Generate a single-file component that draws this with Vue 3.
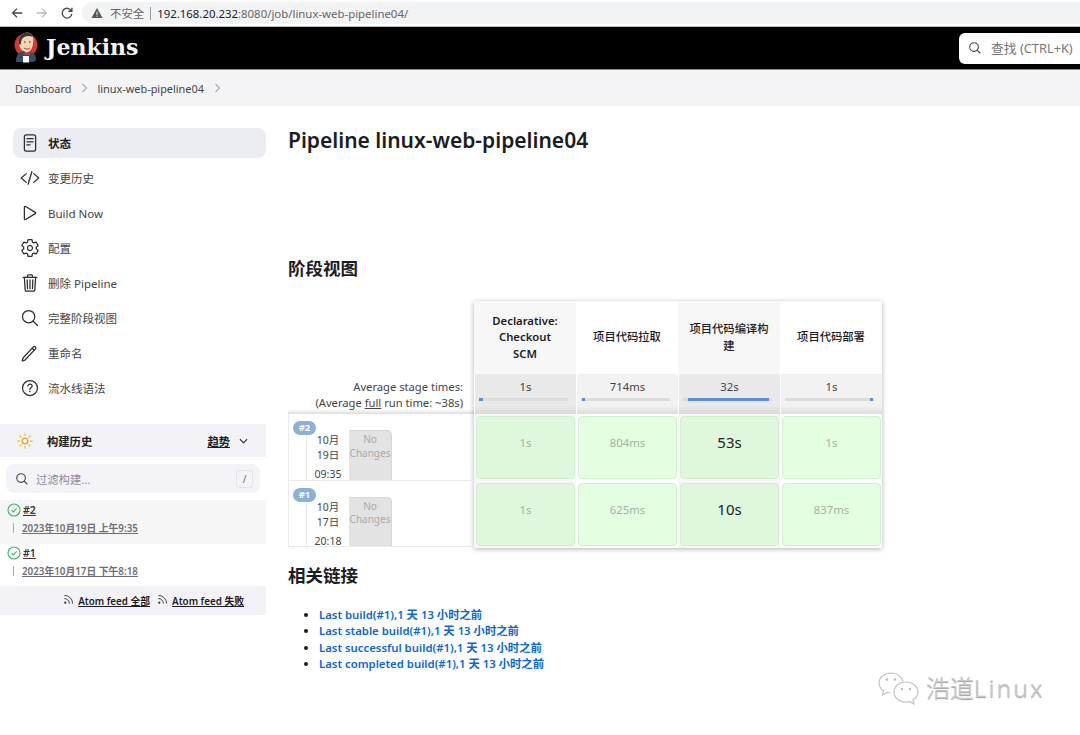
<script setup>
const gear =
  "M262.29 192.31a64 64 0 1057.4 57.4 64.13 64.13 0 00-57.4-57.4zM416.39 256a154.34 154.34 0 01-1.53 20.79l45.21 35.46a10.81 10.81 0 012.45 13.75l-42.77 74a10.81 10.81 0 01-13.14 4.59l-44.9-18.08a16.11 16.11 0 00-15.17 1.75A164.48 164.48 0 01325 400.8a15.94 15.94 0 00-8.82 12.14l-6.73 47.89a11.08 11.08 0 01-10.68 9.17h-85.54a11.11 11.11 0 01-10.69-8.87l-6.72-47.82a16.07 16.07 0 00-9-12.22 155.3 155.3 0 01-21.46-12.57 16 16 0 00-15.11-1.71l-44.89 18.07a10.81 10.81 0 01-13.14-4.58l-42.77-74a10.8 10.8 0 012.45-13.75l38.21-30a16.05 16.05 0 006-14.08c-.36-4.17-.58-8.33-.58-12.5s.21-8.27.58-12.35a16 16 0 00-6.07-13.94l-38.19-30A10.81 10.81 0 0149.48 186l42.77-74a10.81 10.81 0 0113.14-4.59l44.9 18.08a16.11 16.11 0 0015.17-1.75A164.48 164.48 0 01187 111.2a15.94 15.94 0 008.82-12.14l6.73-47.89A11.08 11.08 0 01213.23 42h85.54a11.11 11.11 0 0110.69 8.87l6.72 47.82a16.07 16.07 0 009 12.22 155.3 155.3 0 0121.46 12.57 16 16 0 0015.11 1.71l44.89-18.07a10.81 10.81 0 0113.14 4.58l42.77 74a10.8 10.8 0 01-2.45 13.75l-38.21 30a16.05 16.05 0 00-6.05 14.08c.33 4.14.55 8.3.55 12.47z";

const menu = [
  {
    label: "状态",
    active: true,
    paths: [
      "M160 48h192a48 48 0 0148 48v320a48 48 0 01-48 48H160a48 48 0 01-48-48V96a48 48 0 0148-48z",
      "M176 144h160",
      "M176 224h160",
      "M176 304h80",
    ],
  },
  {
    label: "变更历史",
    paths: ["M160 368L32 256l128-112", "M352 368l128-112-128-112", "M304 96l-96 320"],
  },
  {
    label: "Build Now",
    paths: [
      "M112 111v290c0 17.44 17 28.52 31 20.16l247.9-148.37c12.12-7.25 12.12-26.33 0-33.58L143 90.84c-14-8.36-31 2.72-31 20.16z",
    ],
  },
  { label: "配置", paths: [gear] },
  {
    label: "删除 Pipeline",
    paths: [
      "M112 112l20 320c.95 18.49 14.4 32 32 32h184c17.67 0 30.87-13.51 32-32l20-320",
      "M80 112h352",
      "M192 112V72a23.93 23.93 0 0124-24h80a23.93 23.93 0 0124 24v40",
      "M256 176v224",
      "M184 176l8 224",
      "M328 176l-8 224",
    ],
  },
  {
    label: "完整阶段视图",
    paths: [
      "M221.09 64a157.09 157.09 0 10157.09 157.09A157.1 157.1 0 00221.09 64z",
      "M338.29 338.29L448 448",
    ],
  },
  {
    label: "重命名",
    paths: [
      "M128 436L56 456l20-72L344 100a36 36 0 0152 0h0a36 36 0 010 52z",
      "M312 134l52 52",
    ],
  },
  {
    label: "流水线语法",
    paths: [
      "M256 64a192 192 0 10192 192A192 192 0 00256 64z",
      "M200 202.29s.84-17.5 19.57-32.57C230.68 160.77 244 158.18 256 158c10.93-.14 20.69 1.67 26.53 4.45 10 4.76 29.47 16.38 29.47 41.09 0 26-17 37.81-36.37 50.8S251 281.43 251 296",
      "M250 348a4 4 0 108 0 4 4 0 10-8 0",
    ],
  },
];

const searchPaths = menu[5].paths;

const history = [
  { id: "#2", date: "2023年10月19日 上午9:35", shaded: true },
  { id: "#1", date: "2023年10月17日 下午8:18", shaded: false },
];

const stages = [
  { name: "Declarative: Checkout SCM", avg: "1s", bar: { left: 0, width: 4 } },
  { name: "项目代码拉取", avg: "714ms", bar: { left: 1, width: 4 } },
  { name: "项目代码编译构建", avg: "32s", bar: { left: 6, width: 91 } },
  { name: "项目代码部署", avg: "1s", bar: { left: 96, width: 3 } },
];

const runs = [
  { id: "#2", month: "10月", day: "19日", time: "09:35", cells: ["1s", "804ms", "53s", "1s"] },
  { id: "#1", month: "10月", day: "17日", time: "20:18", cells: ["1s", "625ms", "10s", "837ms"] },
];

const links = ["Last build", "Last stable build", "Last successful build", "Last completed build"];
</script>

<template>
  <div class="page">
    <div class="browser">
      <svg class="nav" viewBox="0 0 16 16"><path d="M14 8H3M8 3L3 8l5 5" fill="none" stroke="#444" stroke-width="1.5" /></svg>
      <svg class="nav" viewBox="0 0 16 16"><path d="M2 8h11M8 3l5 5-5 5" fill="none" stroke="#bbb" stroke-width="1.5" /></svg>
      <svg class="nav" viewBox="0 0 16 16"><path d="M13 5.5A5.6 5.6 0 1013.6 9M13.6 2v4h-4" fill="none" stroke="#444" stroke-width="1.5" /></svg>
      <div class="address">
        <svg class="warn" viewBox="0 0 12 12"><path d="M6 1l5.5 10H.5z" fill="#555" /><path d="M5.5 4.5h1v3.5h-1zM5.5 8.8h1v1h-1z" fill="#f1f3f4" /></svg>
        <span class="insecure">不安全</span>
        <span class="sep"></span>
        <span class="host">192.168.20.232</span><span class="path">:8080/job/linux-web-pipeline04/</span>
      </div>
    </div>

    <header class="top">
      <svg class="logo" viewBox="0 0 24 32">
        <circle cx="12" cy="14" r="11.5" fill="#d33833" />
        <path d="M5 13C4 5 9 1 14 1.5C19 2 20 7 19 13C18 20 14 22 11 21C8 20 6 18 5 13Z" fill="#f0d6b7" />
        <path d="M5 13C4 5 9 1 14 1.5C17 2 18.5 4 19 6C15 4 10 5 8 8C7 10 7 12 6.5 14Z" fill="#3b3335" />
        <path d="M10 11h1.5M15 11h1.5" stroke="#222" stroke-width="1" />
        <path d="M10 17c2 1.5 4 1.5 6 0" fill="none" stroke="#8a4a3a" stroke-width="1" />
        <path d="M2 31c0-8 3-10 8-11l3 3 4-2c4 1 5 4 5 8l-2 2H3z" fill="#335061" />
        <path d="M10.5 21l3 2 3-2-.5 3-2.5-.5-3 .5z" fill="#d33833" />
        <path d="M9 25h6v6.500H9z" fill="#fff" />
      </svg>
      <span class="brand">Jenkins</span>
      <div class="search">
        <svg class="search-icon" viewBox="0 0 512 512">
          <path v-for="d in searchPaths" :key="d" :d="d" />
        </svg>
        <span>查找 (CTRL+K)</span>
      </div>
    </header>

    <nav class="crumbs">
      <span>Dashboard</span>
      <svg class="chev" viewBox="0 0 8 10"><path d="M1.5 1l4 4-4 4" /></svg>
      <span>linux-web-pipeline04</span>
      <svg class="chev" viewBox="0 0 8 10"><path d="M1.5 1l4 4-4 4" /></svg>
    </nav>

    <div class="main">
      <aside class="side">
        <ul class="menu">
          <li v-for="item in menu" :key="item.label" class="menu-item" :class="{ active: item.active }">
            <svg class="menu-icon" viewBox="0 0 512 512">
              <path v-for="d in item.paths" :key="d" :d="d" />
            </svg>
            <span>{{ item.label }}</span>
          </li>
        </ul>

        <section class="history">
          <div class="history-head">
            <svg class="sun" viewBox="0 0 20 20">
              <circle cx="10" cy="10" r="3.2" fill="none" stroke="#f0a020" stroke-width="1.5" />
              <path
                d="M10 1.5v3M10 15.5v3M1.5 10h3M15.5 10h3M4 4l2 2M14 14l2 2M4 16l2-2M14 6l2-2"
                stroke="#f5c242"
                stroke-width="1.5"
              />
            </svg>
            <span class="history-title">构建历史</span>
            <span class="trend">趋势</span>
            <svg class="trend-chev" viewBox="0 0 10 6"><path d="M1 1l4 4 4-4" /></svg>
          </div>
          <div class="filter">
            <svg class="filter-icon" viewBox="0 0 512 512">
              <path v-for="d in searchPaths" :key="d" :d="d" />
            </svg>
            <span class="filter-text">过滤构建...</span>
            <span class="key">/</span>
          </div>
          <div v-for="b in history" :key="b.id" class="build" :class="{ shaded: b.shaded }">
            <div class="build-line">
              <svg class="ok" viewBox="0 0 14 14">
                <circle cx="7" cy="7" r="6" />
                <path d="M4.5 7.2l1.8 1.8 3.4-3.600" />
              </svg>
              <span class="build-id">{{ b.id }}</span>
            </div>
            <div class="build-date">
              <i></i>
              <span>{{ b.date }}</span>
            </div>
          </div>
          <div class="feeds">
            <svg class="rss" viewBox="0 0 12 12"><path d="M1.5 1.5a9 9 0 019 9M1.5 5a5.5 5.5 0 015.5 5.5" /><circle cx="2.5" cy="9.5" r="1.2" /></svg>
            <span class="feed">Atom feed 全部</span>
            <svg class="rss" viewBox="0 0 12 12"><path d="M1.5 1.5a9 9 0 019 9M1.5 5a5.5 5.5 0 015.5 5.5" /><circle cx="2.5" cy="9.5" r="1.2" /></svg>
            <span class="feed">Atom feed 失败</span>
          </div>
        </section>
      </aside>

      <main class="content">
        <h1>Pipeline linux-web-pipeline04</h1>
        <h2 class="stage-title">阶段视图</h2>

        <div class="stage-view">
          <div class="labels">
            <div class="avg-label">
              <div>Average stage times:</div>
              <div>(Average <u>full</u> run time: ~38s)</div>
            </div>
            <div v-for="r in runs" :key="r.id" class="run">
              <span class="badge">{{ r.id }}</span>
              <div class="run-date">
                <div>{{ r.month }}</div>
                <div>{{ r.day }}</div>
                <div class="run-time">{{ r.time }}</div>
              </div>
              <div class="no-changes">No Changes</div>
            </div>
          </div>

          <div class="stages">
            <div v-for="(s, i) in stages" :key="s.name" class="col" :class="{ odd: i % 2 === 0 }">
              <div class="stage-name">{{ s.name }}</div>
              <div class="stage-avg">
                <div>{{ s.avg }}</div>
                <div class="bar">
                  <div class="bar-fill" :style="{ left: s.bar.left + '%', width: s.bar.width + '%' }"></div>
                </div>
              </div>
              <div v-for="r in runs" :key="r.id" class="cell" :class="{ long: i === 2 }">
                {{ r.cells[i] }}
              </div>
            </div>
          </div>
        </div>

        <h2 class="links-title">相关链接</h2>
        <ul class="links">
          <li v-for="l in links" :key="l"><a>{{ l }}(#1),1 天 13 小时之前</a></li>
        </ul>
      </main>
    </div>

    <div class="mark">
      <svg class="mark-icon" viewBox="0 0 44 34">
        <path d="M14 2C7 2 2 6.5 2 12c0 3.5 2 6 4.5 8L5.5 24l5-2.5c1 .3 2 .4 3 .5" />
        <path d="M14 2c6 0 11 3.5 12 8.5" />
        <path d="M29 11c-7 0-12 4.500-12 10s5 10 12 10c1.5 0 2.5-.2 3.5-.5L37 33l-1-4c3-2 5-4.5 5-8 0-5.5-5-10-12-10z" />
        <circle cx="10" cy="8.5" r="1.3" />
        <circle cx="18" cy="8.5" r="1.3" />
        <circle cx="25" cy="18" r="1.2" />
        <circle cx="33" cy="18" r="1.2" />
      </svg>
      <span>浩道<span class="mark-latin">Linux</span></span>
    </div>
  </div>
</template>

<style>
html,
body {
  margin: 0;
  background: #fff;
  overflow: hidden;
}
</style>

<style scoped>
.page {
  position: relative;
  width: 1080px;
  height: 735px;
  overflow: hidden;
  background: #fff;
  font-family: "Noto Sans", "Noto Sans CJK SC", sans-serif;
  color: #1c1c24;
}

.browser {
  display: flex;
  align-items: center;
  height: 26px;
  padding-left: 10px;
  gap: 11px;
  border-bottom: 1px solid #b9b9b9;
}
.nav {
  width: 14px;
  height: 14px;
  flex: none;
}
.address {
  display: flex;
  align-items: center;
  flex: 1;
  height: 22px;
  margin-left: -3px;
  padding-left: 9px;
  background: #f1f3f4;
  border-radius: 11px 0 0 11px;
  font-size: 11.4px;
}
.warn {
  width: 12px;
  height: 12px;
  margin-right: 7px;
}
.insecure {
  color: #666;
}
.sep {
  width: 1px;
  height: 13px;
  margin: 0 6px;
  background: #999;
}
.host {
  color: #222;
}
.path {
  color: #666;
}

.top {
  display: flex;
  align-items: center;
  height: 42px;
  background: #000;
  border-bottom: 1px solid #8a8a8a;
  padding-left: 14px;
}
.logo {
  width: 24px;
  height: 32px;
  margin-top: -2px;
}
.brand {
  margin-left: 8px;
  color: #f5f5f5;
  font-family: "DejaVu Serif", serif;
  font-weight: 700;
  font-size: 22px;
  line-height: 1;
  margin-top: -2px;
}
.search {
  display: flex;
  align-items: center;
  margin-left: auto;
  width: 121px;
  height: 31px;
  box-sizing: border-box;
  padding: 0 0 2px 9px;
  background: #fff;
  border-radius: 6px 0 0 6px;
  color: #777;
  font-size: 12.8px;
  white-space: nowrap;
}
.search-icon {
  width: 14px;
  height: 14px;
  margin: 2px 9px 0 0;
  flex: none;
  fill: none;
  stroke: #444;
  stroke-width: 40;
}

.crumbs {
  display: flex;
  align-items: center;
  height: 36px;
  padding-left: 15px;
  background: #f4f4f7;
  font-size: 10.9px;
  color: #444;
}
.chev {
  width: 8px;
  height: 10px;
  margin: 0 8px 0 10px;
  fill: none;
  stroke: #aaa;
  stroke-width: 1.2;
}

.main {
  display: flex;
}
.side {
  width: 266px;
  flex: none;
  padding-top: 22px;
}
.menu {
  list-style: none;
  margin: 0 0 0 13px;
  padding: 0;
}
.menu-item {
  display: flex;
  align-items: center;
  height: 30px;
  margin-bottom: 5px;
  padding-left: 7px;
  border-radius: 8px;
  font-size: 11.5px;
  color: #444;
}
.menu-item.active {
  background: #ecedf2;
  color: #1c1c24;
  font-weight: 600;
}
.menu-icon {
  width: 20px;
  height: 20px;
  margin-right: 8px;
  flex: none;
  fill: none;
  stroke: #2c2c34;
  stroke-width: 32;
  stroke-linecap: round;
  stroke-linejoin: round;
}

.history {
  margin-top: 21px;
}
.history-head {
  display: flex;
  align-items: center;
  height: 33px;
  padding-left: 16px;
  background: #f3f3f7;
  font-size: 11.3px;
  font-weight: 600;
}
.sun {
  width: 18px;
  height: 18px;
  margin-right: 13px;
}
.trend {
  margin-left: auto;
  text-decoration: underline;
}
.trend-chev {
  width: 9px;
  height: 6px;
  margin: 0 18px 0 9px;
  fill: none;
  stroke: #333;
  stroke-width: 1.3;
}
.filter {
  display: flex;
  align-items: center;
  height: 29px;
  margin: 7px 6px 7px;
  padding: 0 7px 0 9px;
  border-radius: 8px;
  background: #f3f3f8;
  font-size: 11.3px;
  color: #8d8da5;
}
.filter-icon {
  width: 14px;
  height: 14px;
  margin-right: 7px;
  fill: none;
  stroke: #444;
  stroke-width: 40;
}
.key {
  margin-left: auto;
  width: 17px;
  height: 18px;
  box-sizing: border-box;
  line-height: 16px;
  text-align: center;
  border: 1px solid #e4e4ec;
  border-radius: 3px;
  font-size: 10px;
  color: #666;
}
.build {
  height: 42px;
  box-sizing: border-box;
  padding: 2px 0 0 7px;
}
.build.shaded {
  background: #f6f6f6;
  height: 44px;
  padding-top: 3px;
}
.build-line {
  display: flex;
  align-items: center;
  height: 14px;
}
.ok {
  width: 14px;
  height: 14px;
  margin-right: 2px;
  fill: none;
  stroke: #3fb56a;
  stroke-width: 1.1;
}
.build-id {
  font-size: 10.5px;
  font-weight: 600;
  color: #333;
  text-decoration: underline;
}
.build-date {
  display: flex;
  align-items: center;
  height: 14px;
  margin-top: 3.5px;
  margin-left: 6px;
  font-size: 9.8px;
  font-weight: 600;
  color: #6e6e78;
  text-decoration: underline;
  white-space: nowrap;
}
.build-date i {
  width: 1px;
  height: 10px;
  margin-right: 8px;
  background: #aaa;
}
.feeds {
  display: flex;
  align-items: center;
  justify-content: flex-end;
  height: 29px;
  padding-right: 22px;
  background: #f3f3f7;
  font-size: 9.8px;
  font-weight: 600;
  white-space: nowrap;
}
.rss {
  width: 11px;
  height: 11px;
  margin: -2px 4px 0 7px;
  fill: none;
  stroke: #333;
  stroke-width: 1;
}
.rss circle {
  fill: #333;
  stroke: none;
}
.feed {
  text-decoration: underline;
}

.content {
  flex: 1;
  padding: 19px 0 0 22px;
}
h1 {
  margin: 0;
  font-size: 21px;
  line-height: 30px;
  font-weight: 600;
}
h2 {
  margin: 0;
  font-size: 17.5px;
  line-height: 24px;
  font-weight: 600;
}
.stage-title {
  margin-top: 101px;
}
.stage-view {
  display: flex;
  margin-top: 21px;
}
.labels {
  width: 186px;
  flex: none;
  padding-top: 73px;
}
.avg-label {
  height: 40px;
  box-sizing: border-box;
  padding: 5px 11px 0 0;
  text-align: right;
  font-size: 11.2px;
  line-height: 16px;
  color: #444;
  background: linear-gradient(#fff 88%, #ddd);
}
.run {
  position: relative;
  display: flex;
  height: 66.5px;
  box-sizing: border-box;
  padding: 16px 0 0 17px;
  border: 1px solid #eaeaea;
  border-width: 0 0 1px 1px;
  font-size: 10.5px;
  color: #444;
}
.badge {
  position: absolute;
  left: 4px;
  top: 7px;
  width: 23px;
  height: 14px;
  line-height: 14px;
  text-align: center;
  border-radius: 7px;
  background: #8cb0d8;
  color: #fff;
  font-size: 9.5px;
  font-weight: 700;
}
.run-date {
  width: 43px;
  text-align: center;
  line-height: 15px;
  padding-top: 3px;
  border-left: 1px solid #e8e8e8;
  box-sizing: border-box;
  white-space: nowrap;
}
.run-time {
  margin-top: 4px;
}
.no-changes {
  width: 43px;
  box-sizing: border-box;
  padding-top: 2px;
  text-align: center;
  background: #e3e3e3;
  border: 1px solid #d6d6d6;
  border-width: 1px 1px 0 0;
  border-radius: 0 5px 0 0;
  color: #aaa;
  line-height: 13.5px;
  font-size: 10px;
}
.stages {
  display: flex;
  box-shadow: 0 1px 5px rgba(0, 0, 0, 0.3);
}
.col {
  width: 102px;
  background: #fff;
}
.col.odd {
  background: #f7f7f7;
}
.stage-name {
  display: flex;
  align-items: center;
  justify-content: center;
  height: 73px;
  box-sizing: border-box;
  padding: 0 11px;
  text-align: center;
  font-size: 11.3px;
  line-height: 16.3px;
  font-weight: 500;
}
.col:first-child .stage-name {
  padding: 0 16px;
  font-weight: 600;
}
.stage-avg {
  height: 40px;
  box-sizing: border-box;
  padding-top: 5px;
  text-align: center;
  font-size: 11.3px;
  line-height: 16px;
  color: #444;
  background: linear-gradient(#f2f2f2 80%, #dcdcdc);
  border-left: 1px solid #fff;
}
.col.odd .stage-avg {
  background: linear-gradient(#e9e9e9 80%, #d8d8d8);
}
.bar {
  position: relative;
  height: 3px;
  margin: 3px 8px 0 4px;
  background: #dcdcdc;
}
.bar-fill {
  position: absolute;
  top: 0;
  height: 3px;
  background: #5b8fd9;
}
.cell {
  display: flex;
  align-items: center;
  justify-content: center;
  height: 63px;
  margin: 2px 1px 2px 2px;
  padding-bottom: 11px;
  border: 1px solid #d5ecd2;
  border-radius: 4px;
  box-sizing: border-box;
  background: #e4fee2;
  font-size: 11.3px;
  color: #a3b3a2;
}
.cell + .cell {
  margin-top: 4px;
}
.col.odd .cell {
  background: #dff7dd;
}
.cell.long {
  color: #222;
  font-size: 15px;
}
.links-title {
  margin-top: 15px;
}
.links {
  margin: 20px 0 0;
  padding-left: 31px;
  font-size: 11.35px;
  line-height: 16.3px;
  font-weight: 600;
}
.links a {
  color: #0a68d0;
}

.mark {
  position: absolute;
  left: 877px;
  top: 671px;
  display: flex;
  align-items: center;
  gap: 5px;
  color: #c9c9c9;
  font-size: 24px;
  font-weight: 300;
  line-height: 34px;
  text-shadow: 0 1px 1px #999;
}
.mark-latin {
  letter-spacing: 2.4px;
}
.mark-icon {
  width: 44px;
  height: 34px;
  fill: none;
  stroke: #c4c4c4;
  stroke-width: 1.2;
}
.mark-icon circle {
  fill: #bbb;
  stroke: none;
}
</style>
